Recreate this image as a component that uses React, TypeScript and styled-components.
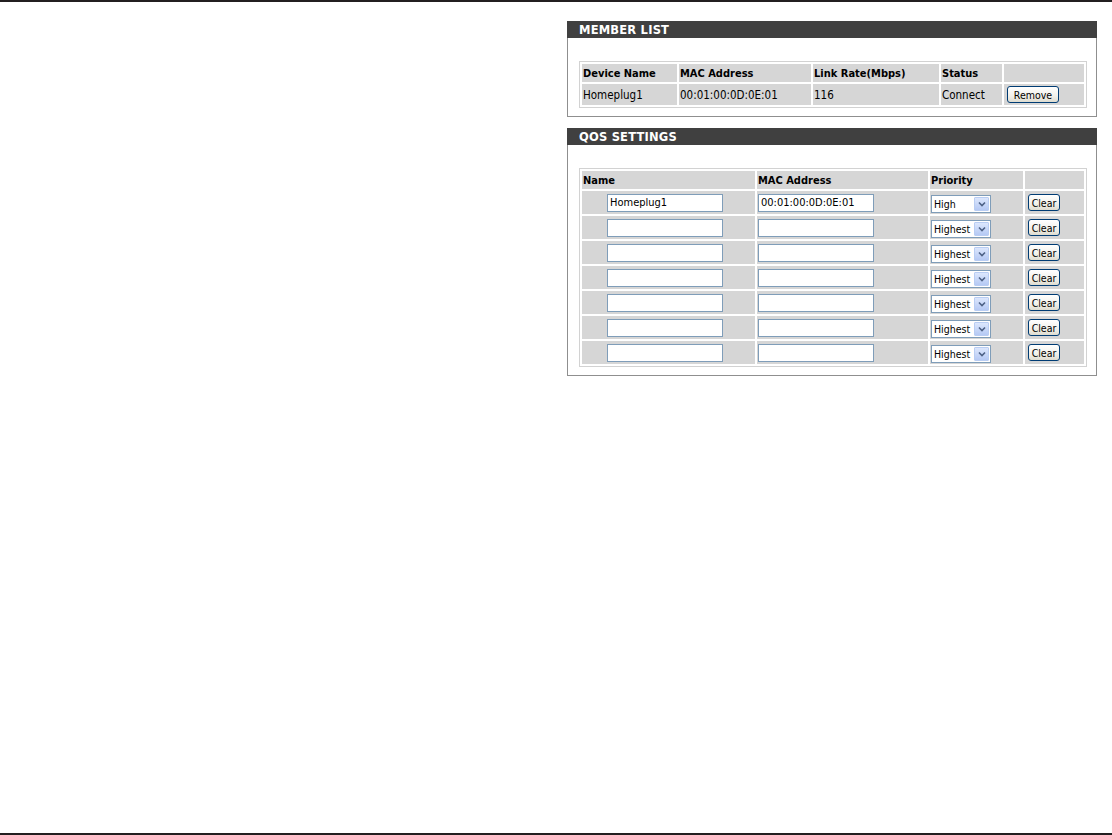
import React from 'react';
import styled, { createGlobalStyle } from 'styled-components';

const GlobalStyle = createGlobalStyle`
  html, body {
    margin: 0;
    padding: 0;
    background: #fff;
  }
  body {
    font-family: "DejaVu Sans Condensed", "Liberation Sans", sans-serif;
    color: #000;
  }
`;

const Page = styled.div`
  width: 1112px;
  height: 835px;
  display: flex;
  flex-direction: column;
  overflow: hidden;
`;

const Rule = styled.div`
  height: 2px;
  flex-shrink: 0;
  background: #231f20;
`;

const Main = styled.div`
  flex: 1;
  display: flex;
  flex-direction: column;
  align-items: flex-end;
  gap: 11px;
  padding: 19px 15px 0 0;
`;

const Panel = styled.section`
  width: 530px;
  box-sizing: border-box;
  border: 1px solid #8f8f8f;
  background: #fff;
`;

const PanelHeader = styled.h2`
  margin: -1px -1px 0;
  height: 17px;
  box-sizing: border-box;
  padding: 1px 0 0 12px;
  display: flex;
  align-items: center;
  background: #404040;
  color: #fff;
  font-family: "DejaVu Sans", "Liberation Sans", sans-serif;
  font-size: 11.5px;
  font-weight: bold;
  letter-spacing: 0.2px;
`;

const PanelBody = styled.div`
  padding: 23px 9px 8px 11px;
`;

const Table = styled.table`
  width: 100%;
  table-layout: fixed;
  border-collapse: separate;
  border-spacing: 2px;
  border: 1px solid #d2d2d2;
  background: #fff;
`;

const Row = styled.tr<{ $h: number }>`
  & > td,
  & > th {
    height: ${({ $h }) => $h}px;
  }
`;

const Th = styled.th`
  background: #d6d6d6;
  padding: 0 1px;
  text-align: left;
  vertical-align: middle;
  font-family: "DejaVu Sans Condensed", "DejaVu Sans", sans-serif;
  font-size: 11px;
  font-weight: bold;
  white-space: nowrap;
`;

const Td = styled.td<{ $indent?: number }>`
  background: #d6d6d6;
  padding: 0 1px 0 ${({ $indent }) => $indent ?? 1}px;
  vertical-align: middle;
  font-size: 11.5px;
  white-space: nowrap;
`;

const TextInput = styled.input`
  display: block;
  width: 116px;
  height: 18px;
  box-sizing: border-box;
  margin: 0;
  padding: 0 2px;
  border: 1px solid #7f9db9;
  background: #fff;
  font-family: "DejaVu Sans Condensed", "Liberation Sans", sans-serif;
  font-size: 11px;
  color: #000;
  outline: none;
`;

const SelectBox = styled.div`
  width: 60px;
  height: 18px;
  box-sizing: border-box;
  margin-top: 2px;
  padding-left: 2px;
  border: 1px solid #7f9db9;
  background: #fff;
  display: flex;
  align-items: center;
  font-size: 10.5px;
`;

const SelectValue = styled.span`
  flex: 1;
`;

const SelectArrow = styled.span`
  width: 15px;
  height: 14px;
  margin-right: 1px;
  box-sizing: border-box;
  border: 1px solid #b9cdf3;
  border-radius: 1px;
  background: linear-gradient(#dce7fd, #b5c9f4);
  display: flex;
  align-items: center;
  justify-content: center;
`;

const XpButton = styled.button<{ $w: number }>`
  width: ${({ $w }) => $w}px;
  height: 17px;
  margin: 0 0 0 2px;
  padding: 0;
  box-sizing: border-box;
  border: 1px solid #003c74;
  border-radius: 3px;
  background: linear-gradient(#ffffff, #f1f0ea 60%, #dedcd0);
  font-family: "DejaVu Sans Condensed", "Liberation Sans", sans-serif;
  font-size: 10.5px;
  color: #000;
  cursor: pointer;
`;

const Chevron = () => (
  <svg width="8" height="6" viewBox="0 0 8 6">
    <path d="M1 1.5 L4 4.5 L7 1.5" fill="none" stroke="#4d6185" strokeWidth="1.6" />
  </svg>
);

const PrioritySelect: React.FC<{ value: string }> = ({ value }) => (
  <SelectBox role="listbox" aria-label="Priority">
    <SelectValue>{value}</SelectValue>
    <SelectArrow>
      <Chevron />
    </SelectArrow>
  </SelectBox>
);

const qosRows = [
  { name: 'Homeplug1', mac: '00:01:00:0D:0E:01', priority: 'High' },
  { name: '', mac: '', priority: 'Highest' },
  { name: '', mac: '', priority: 'Highest' },
  { name: '', mac: '', priority: 'Highest' },
  { name: '', mac: '', priority: 'Highest' },
  { name: '', mac: '', priority: 'Highest' },
  { name: '', mac: '', priority: 'Highest' },
];

const App: React.FC = () => (
  <Page>
    <GlobalStyle />
    <Rule />
    <Main>
      <Panel>
        <PanelHeader>MEMBER LIST</PanelHeader>
        <PanelBody>
          <Table>
            <colgroup>
              <col style={{ width: 95 }} />
              <col style={{ width: 132 }} />
              <col style={{ width: 126 }} />
              <col style={{ width: 61 }} />
              <col style={{ width: 80 }} />
            </colgroup>
            <thead>
              <Row $h={18}>
                <Th>Device Name</Th>
                <Th>MAC Address</Th>
                <Th>Link Rate(Mbps)</Th>
                <Th>Status</Th>
                <Th />
              </Row>
            </thead>
            <tbody>
              <Row $h={21}>
                <Td>Homeplug1</Td>
                <Td>00:01:00:0D:0E:01</Td>
                <Td>116</Td>
                <Td>Connect</Td>
                <Td>
                  <XpButton $w={52}>Remove</XpButton>
                </Td>
              </Row>
            </tbody>
          </Table>
        </PanelBody>
      </Panel>

      <Panel>
        <PanelHeader>QOS SETTINGS</PanelHeader>
        <PanelBody>
          <Table>
            <colgroup>
              <col style={{ width: 173 }} />
              <col style={{ width: 171 }} />
              <col style={{ width: 93 }} />
              <col style={{ width: 59 }} />
            </colgroup>
            <thead>
              <Row $h={18}>
                <Th>Name</Th>
                <Th>MAC Address</Th>
                <Th>Priority</Th>
                <Th />
              </Row>
            </thead>
            <tbody>
              {qosRows.map((r, i) => (
                <Row $h={23} key={i}>
                  <Td $indent={25}>
                    <TextInput defaultValue={r.name} />
                  </Td>
                  <Td>
                    <TextInput defaultValue={r.mac} />
                  </Td>
                  <Td>
                    <PrioritySelect value={r.priority} />
                  </Td>
                  <Td>
                    <XpButton $w={32}>Clear</XpButton>
                  </Td>
                </Row>
              ))}
            </tbody>
          </Table>
        </PanelBody>
      </Panel>
    </Main>
    <Rule />
  </Page>
);

export default App;
